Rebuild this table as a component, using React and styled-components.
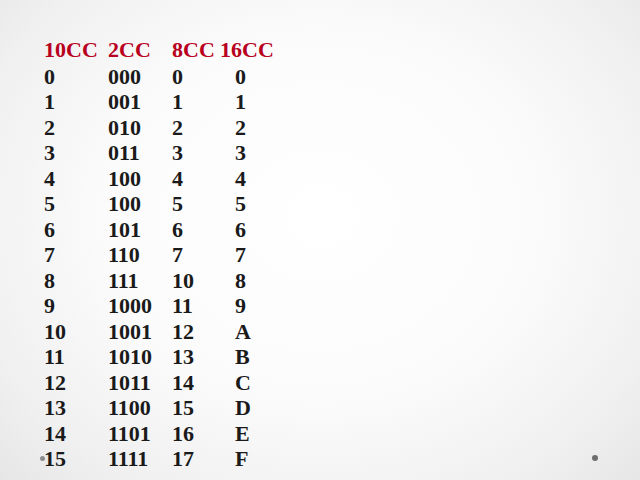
import styled, { createGlobalStyle } from 'styled-components'

const GlobalStyle = createGlobalStyle`
  html, body {
    margin: 0;
    padding: 0;
  }
  body {
    font-family: "Liberation Serif", "Times New Roman", serif;
  }
`

const Slide = styled.div`
  position: relative;
  width: 640px;
  height: 480px;
  overflow: hidden;
  box-sizing: border-box;
  padding: 37px 0 0 44px;
  background: radial-gradient(ellipse 75% 85% at 50% 45%, #ffffff 0%, #fbfbfb 45%, #f0f0f0 75%, #e2e2e2 100%);
`

const Table = styled.div`
  display: grid;
  grid-template-columns: 64px 64px 48px auto;
  font-size: 22px;
  font-weight: bold;
  line-height: 25.5px;
  color: #1a1a1a;
`

const Head = styled.div`
  color: #b8001e;
  margin-bottom: 1px;
  white-space: nowrap;
`

const Cell = styled.div`
  padding-left: ${p => (p.$indent ? '15px' : '0')};
  white-space: nowrap;
`

const Dot = styled.span`
  position: absolute;
  top: ${p => p.$y - p.$size / 2}px;
  left: ${p => p.$x - p.$size / 2}px;
  width: ${p => p.$size}px;
  height: ${p => p.$size}px;
  border-radius: 50%;
  background: ${p => p.$color};
`

const rows = [
  ['0', '000', '0', '0'],
  ['1', '001', '1', '1'],
  ['2', '010', '2', '2'],
  ['3', '011', '3', '3'],
  ['4', '100', '4', '4'],
  ['5', '100', '5', '5'],
  ['6', '101', '6', '6'],
  ['7', '110', '7', '7'],
  ['8', '111', '10', '8'],
  ['9', '1000', '11', '9'],
  ['10', '1001', '12', 'A'],
  ['11', '1010', '13', 'B'],
  ['12', '1011', '14', 'C'],
  ['13', '1100', '15', 'D'],
  ['14', '1101', '16', 'E'],
  ['15', '1111', '17', 'F'],
]

const headers = ['10CC', '2CC', '8CC', '16CC']

export default function App() {
  return (
    <>
      <GlobalStyle />
      <Slide>
        <Table>
          {headers.map(h => (
            <Head key={h}>{h}</Head>
          ))}
          {rows.map(r =>
            r.map((v, i) => (
              <Cell key={r[0] + '-' + i} $indent={i === 3}>
                {v}
              </Cell>
            ))
          )}
        </Table>
        <Dot $x={42} $y={458} $size={5} $color="#8c8c8c" />
        <Dot $x={595} $y={458} $size={6} $color="#6e6e6e" />
      </Slide>
    </>
  )
}
